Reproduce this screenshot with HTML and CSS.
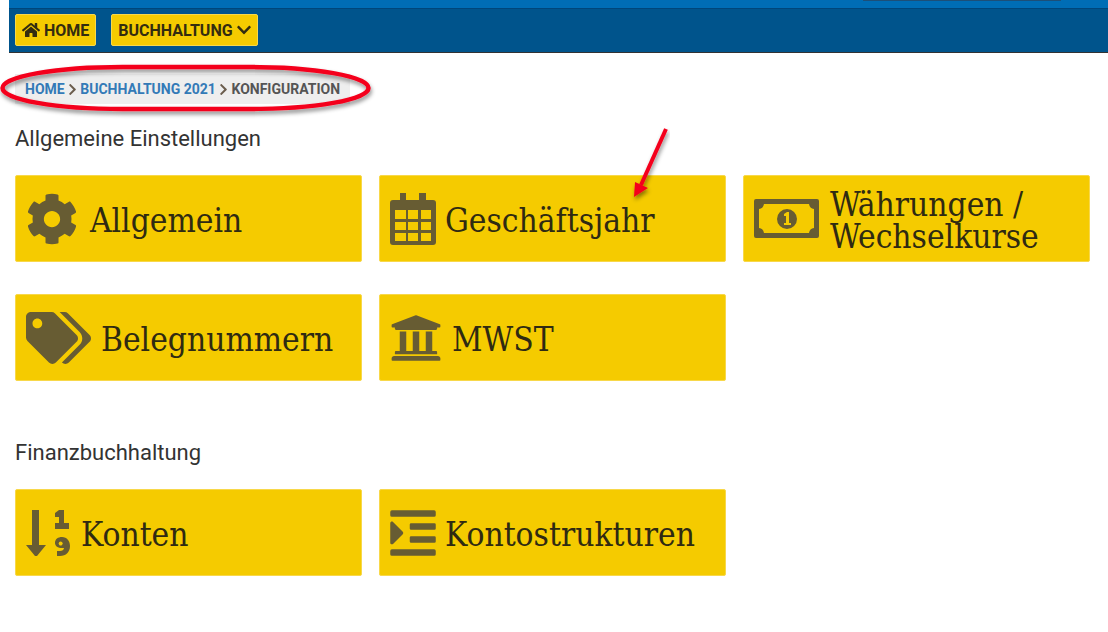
FILE: index.html
```html
<!DOCTYPE html>
<html lang="de">
<head>
<meta charset="utf-8">
<title>Konfiguration</title>
<link rel="stylesheet" href="styles.css">
</head>
<body>
<header class="header">
  <div class="topbar"><div class="topbar-box"></div></div>
  <nav class="nav">
    <a class="nav-btn">
      <svg class="nav-home" viewBox="0 0 576 512"><path d="M280.37 148.26L96 300.11V464a16 16 0 0 0 16 16l112.06-.29a16 16 0 0 0 15.92-16V368a16 16 0 0 1 16-16h64a16 16 0 0 1 16 16v95.64a16 16 0 0 0 16 16.05L464 480a16 16 0 0 0 16-16V300L295.67 148.26a12.19 12.19 0 0 0-15.3 0zM571.6 251.47L488 182.56V44.05a12 12 0 0 0-12-12h-56a12 12 0 0 0-12 12v72.61L318.47 43a48 48 0 0 0-61 0L4.34 251.47a12 12 0 0 0-1.6 16.9l25.5 31A12 12 0 0 0 45.15 301l235.22-193.74a12.19 12.19 0 0 1 15.3 0L530.9 301a12 12 0 0 0 16.9-1.6l25.5-31a12 12 0 0 0-1.7-16.93z"/></svg>
      <span>Home</span>
    </a>
    <a class="nav-btn">
      <span>Buchhaltung</span>
      <svg class="nav-chev" viewBox="0 0 448 512"><path d="M207.029 381.476L12.686 187.132c-9.373-9.373-9.373-24.569 0-33.941l22.667-22.667c9.357-9.357 24.522-9.375 33.901-.04L224 284.505l154.745-154.021c9.379-9.335 24.544-9.317 33.901.04l22.667 22.667c9.373 9.373 9.373 24.569 0 33.941L240.971 381.476c-9.373 9.372-24.569 9.372-33.942 0z"/></svg>
    </a>
  </nav>
</header>
<main class="main">
  <div class="crumbs">
    <a class="crumb-link">Home</a>
    <svg class="crumb-sep" viewBox="0 0 320 512"><path d="M285.476 272.971L91.132 467.314c-9.373 9.373-24.569 9.373-33.941 0l-22.667-22.667c-9.357-9.357-9.375-24.522-.04-33.901L188.505 256 34.484 101.255c-9.335-9.379-9.317-24.544.04-33.901l22.667-22.667c9.373-9.373 24.569-9.373 33.941 0L285.475 239.03c9.373 9.372 9.373 24.568.001 33.941z"/></svg>
    <a class="crumb-link">Buchhaltung 2021</a>
    <svg class="crumb-sep" viewBox="0 0 320 512"><path d="M285.476 272.971L91.132 467.314c-9.373 9.373-24.569 9.373-33.941 0l-22.667-22.667c-9.357-9.357-9.375-24.522-.04-33.901L188.505 256 34.484 101.255c-9.335-9.379-9.317-24.544.04-33.901l22.667-22.667c9.373-9.373 24.569-9.373 33.941 0L285.475 239.03c9.373 9.372 9.373 24.568.001 33.941z"/></svg>
    <span class="crumb-current">Konfiguration</span>
  </div>

  <section class="section">
    <h2 class="section-title">Allgemeine Einstellungen</h2>
    <div class="tiles">
      <a class="tile">
        <svg class="icon icon-cog" viewBox="0 0 512 512"><path d="M487.4 315.7l-42.6-24.6c4.3-23.2 4.3-47 0-70.2l42.6-24.6c4.9-2.8 7.1-8.6 5.5-14-11.1-35.6-30-67.8-54.7-94.6-3.8-4.1-10-5.1-14.8-2.3L380.8 110c-17.9-15.4-38.5-27.3-60.8-35.1V25.8c0-5.6-3.9-10.5-9.4-11.7-36.7-8.2-74.3-7.8-109.2 0-5.5 1.2-9.4 6.1-9.4 11.7V75c-22.2 7.9-42.8 19.8-60.8 35.1L88.7 85.5c-4.9-2.8-11-1.9-14.8 2.3-24.7 26.7-43.6 58.9-54.7 94.6-1.7 5.4.6 11.2 5.5 14L67.3 221c-4.3 23.2-4.3 47 0 70.2l-42.6 24.6c-4.9 2.8-7.1 8.6-5.5 14 11.1 35.6 30 67.8 54.7 94.6 3.8 4.1 10 5.1 14.8 2.3l42.6-24.6c17.9 15.4 38.5 27.3 60.8 35.1v49.2c0 5.6 3.9 10.5 9.4 11.7 36.7 8.2 74.3 7.8 109.2 0 5.5-1.2 9.4-6.1 9.4-11.7v-49.2c22.2-7.9 42.8-19.8 60.8-35.1l42.6 24.6c4.9 2.8 11 1.9 14.8-2.3 24.7-26.7 43.6-58.9 54.7-94.6 1.5-5.5-.7-11.3-5.6-14.1zM256 336c-44.1 0-80-35.9-80-80s35.9-80 80-80 80 35.9 80 80-35.9 80-80 80z"/></svg>
        <span class="tile-label">Allgemein</span>
      </a>
      <a class="tile">
        <svg class="icon icon-cal" viewBox="0 0 46 52"><path fill-rule="evenodd" d="M10 0h6v7h-6zM29 0h7v7h-7zM3 7h40a3 3 0 0 1 3 3v39a3 3 0 0 1-3 3H3a3 3 0 0 1-3-3V10a3 3 0 0 1 3-3zM5 17v9h11v-9zM18 17v9h10v-9zM31 17v9h10v-9zM5 29v8h11v-8zM18 29v8h10v-8zM31 29v8h10v-8zM5 40v8h11v-8zM18 40v8h10v-8zM31 40v8h10v-8z"/></svg>
        <span class="tile-label">Geschäftsjahr</span>
      </a>
      <a class="tile">
        <svg class="icon icon-money" viewBox="0 0 65 39"><path fill-rule="evenodd" d="M2 0h61a2 2 0 0 1 2 2v35a2 2 0 0 1-2 2H2a2 2 0 0 1-2-2V2a2 2 0 0 1 2-2zM10 5a6 6 0 0 1-5 5v19a6 6 0 0 1 5 5h45a6 6 0 0 1 5-5V10a6 6 0 0 1-5-5z"/><path fill-rule="evenodd" d="M33 10a10 10 0 1 1 0 20a10 10 0 0 1 0-20zM30 15v2h2v7h-2v2h7v-2h-2V13h-2z"/></svg>
        <span class="tile-label">Währungen / Wechselkurse</span>
      </a>
      <a class="tile">
        <svg class="icon icon-tags" viewBox="0 0 640 512"><path d="M497.941 225.941L286.059 14.059A48 48 0 0 0 252.118 0H48C21.49 0 0 21.49 0 48v204.118a48 48 0 0 0 14.059 33.941l211.882 211.882c18.744 18.745 49.136 18.746 67.882 0l204.118-204.118c18.745-18.745 18.745-49.137 0-67.882zM112 160c-26.51 0-48-21.49-48-48s21.49-48 48-48 48 21.49 48 48-21.49 48-48 48zm513.941 133.823L421.823 497.941c-18.745 18.745-49.137 18.745-67.882 0l-.36-.36L527.64 323.522c16.999-16.999 26.36-39.6 26.36-63.64s-9.362-46.641-26.36-63.64L331.397 0h48.721a48 48 0 0 1 33.941 14.059l211.882 211.882c18.745 18.745 18.745 49.137 0 67.882z"/></svg>
        <span class="tile-label">Belegnummern</span>
      </a>
      <a class="tile">
        <svg class="icon icon-bank" viewBox="0 0 512 512"><path d="M496 128v16a8 8 0 0 1-8 8h-24v12c0 6.627-5.373 12-12 12H60c-6.627 0-12-5.373-12-12v-12H24a8 8 0 0 1-8-8v-16a8 8 0 0 1 4.941-7.392l232-88a7.996 7.996 0 0 1 6.118 0l232 88A8 8 0 0 1 496 128zm-24 304H40c-13.255 0-24 10.745-24 24v16a8 8 0 0 0 8 8h464a8 8 0 0 0 8-8v-16c0-13.255-10.745-24-24-24zM96 192v192H60c-6.627 0-12 5.373-12 12v20h416v-20c0-6.627-5.373-12-12-12h-36V192h-64v192h-64V192h-64v192h-64V192H96z"/></svg>
        <span class="tile-label">MWST</span>
      </a>
    </div>
  </section>

  <section class="section section-second">
    <h2 class="section-title">Finanzbuchhaltung</h2>
    <div class="tiles">
      <a class="tile">
        <svg class="icon icon-sort" viewBox="0 0 44 46"><path d="M6 0h7v35h7l-9 11h-2L0 35h6z"/><path d="M33 0h5v13h5v6H29v-6h4V7h-4V3zM36 27c5 0 8 4 8 9c0 6-4 10-10 10h-3v-5h3c2 0 4-1 4-3h-2c-4 0-7-2-7-5c0-4 3-6 7-6zM36 32a2 2 0 1 0 0 3a2 2 0 0 0 0-3z" fill-rule="evenodd"/></svg>
        <span class="tile-label">Konten</span>
      </a>
      <a class="tile">
        <svg class="icon icon-indent" viewBox="0 0 448 512"><path d="M27.31 363.3l96-96a16 16 0 0 0 0-22.62l-96-96C17.27 138.66 0 145.78 0 160v192c0 14.31 17.29 21.3 27.31 11.3zM432 416H16a16 16 0 0 0-16 16v32a16 16 0 0 0 16 16h416a16 16 0 0 0 16-16v-32a16 16 0 0 0-16-16zm3.17-128H204.83A12.82 12.82 0 0 0 192 300.83v38.34A12.82 12.82 0 0 0 204.83 352h230.34A12.82 12.82 0 0 0 448 339.17v-38.34A12.82 12.82 0 0 0 435.17 288zm0-128H204.83A12.82 12.82 0 0 0 192 172.83v38.34A12.82 12.82 0 0 0 204.83 224h230.34A12.82 12.82 0 0 0 448 211.17v-38.34A12.82 12.82 0 0 0 435.17 160zM432 32H16A16 16 0 0 0 0 48v32a16 16 0 0 0 16 16h416a16 16 0 0 0 16-16V48a16 16 0 0 0-16-16z"/></svg>
        <span class="tile-label">Kontostrukturen</span>
      </a>
    </div>
  </section>
</main>

<svg class="annotations" width="1108" height="632" viewBox="0 0 1108 632" aria-hidden="true">
  <defs>
    <filter id="shadow" x="-10%" y="-30%" width="120%" height="170%">
      <feDropShadow dx="1" dy="3" stdDeviation="2" flood-color="#000" flood-opacity=".45"/>
    </filter>
  </defs>
  <rect class="ring" x="2.5" y="67" width="366" height="42" rx="120" ry="21" filter="url(#shadow)"/>
  <g filter="url(#shadow)">
    <path class="arrow-line" d="M666 129L641 185"/>
    <path class="arrow-head" d="M634 197L635 182L648 188z"/>
  </g>
</svg>
</body>
</html>
```

FILE: styles.css
```css
* { box-sizing: border-box; }

html, body {
  margin: 0;
  padding: 0;
  height: 632px;
  overflow: hidden;
  background: #fff;
}

body {
  position: relative;
  font-family: Roboto, "Liberation Sans", sans-serif;
  color: #333;
}

.header { margin-left: 9px; }

.topbar {
  height: 9px;
  background: #006db5;
  border-bottom: 1px solid #00467a;
  padding-left: 854px;
}

.topbar-box {
  width: 198px;
  height: 1px;
  background: #1d4f78;
}

.nav {
  height: 44px;
  background: #00548c;
  border-bottom: 1px solid #333;
  display: flex;
  gap: 15px;
  padding: 5px 6px 0;
}

.nav-btn {
  height: 32px;
  display: flex;
  align-items: center;
  gap: 4px;
  padding: 0 6px;
  background: #f5cb00;
  border: 1px solid #f8d84a;
  border-radius: 2px;
  color: #332c10;
  font-size: 16px;
  font-weight: 700;
  text-transform: uppercase;
}

.nav-home { width: 18px; height: 16px; fill: #332c10; }
.nav-chev { width: 14px; height: 16px; fill: #332c10; }

.main { padding: 21px 18px 0 15px; }

.crumbs {
  display: inline-flex;
  align-items: center;
  gap: 3.3px;
  height: 30px;
  padding: 0 10px;
  background: #eee;
  font-size: 14px;
  font-weight: 700;
  text-transform: uppercase;
  vertical-align: top;
}

.crumb-link { color: #337ab7; }
.crumb-current { color: #555; }
.crumb-sep { width: 9px; height: 13px; fill: #6b5d4d; }

.section { margin-top: 20px; }
.section-second { margin-top: 57px; }

.section-title {
  margin: 0 0 21px;
  font-size: 22px;
  font-weight: 400;
  line-height: 30px;
  color: #333;
}

.tiles {
  display: grid;
  grid-template-columns: repeat(3, 347px);
  grid-auto-rows: 87px;
  gap: 32px 17px;
}

.tile {
  display: flex;
  align-items: center;
  gap: 10px;
  padding: 0 10px;
  background: #f5cb00;
  border: 1px solid #f8d84a;
  border-radius: 2px;
  color: #2f2a12;
}

.tile-label {
  font-family: "DejaVu Serif Condensed", "DejaVu Serif", serif;
  font-stretch: condensed;
  font-size: 33.2px;
  line-height: 32px;
  padding-top: 4px;
}

.icon { flex: none; fill: #675c33; height: 52px; }
.icon-cog { width: 52px; margin-right: 2px; }
.icon-cal { width: 46px; margin-right: -1px; }
.icon-money { width: 65px; height: 39px; margin-right: 1px; }
.icon-tags { width: 65px; }
.icon-bank { width: 52px; }
.icon-sort { width: 44px; height: 46px; margin-right: 1px; }
.icon-indent { width: 46px; margin-right: -1px; }

.annotations {
  position: absolute;
  left: 0;
  top: 0;
  pointer-events: none;
}

.ring { fill: none; stroke: #f4001e; stroke-width: 4.5; }
.arrow-line { fill: none; stroke: #f4001e; stroke-width: 4; }
.arrow-head { fill: #f4001e; }
```
